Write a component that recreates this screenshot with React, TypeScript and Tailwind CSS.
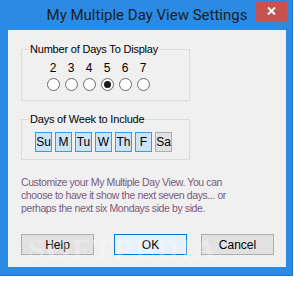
import React from "react";

const days = ["Su", "M", "Tu", "W", "Th", "F", "Sa"];
const nums = [2, 3, 4, 5, 6, 7];

export default function App() {
  const font = { fontFamily: '"Liberation Sans", Arial, sans-serif' };
  return (
    <div className="w-[294px] h-[286px] bg-white relative overflow-hidden" style={font}>
      <div className="w-[293px] h-[276px] bg-[#2b8be4] flex flex-col border-r border-b border-[#1f75c6]">
        <div className="h-[30px] relative flex items-start">
          <div className="flex-1 text-center pt-[5px] pl-[2px] text-[15px] leading-[20px] text-[#1e1e1e] whitespace-nowrap" style={{ fontFamily: 'Roboto, "Noto Sans", sans-serif' }}>
            My Multiple Day View Settings
          </div>
          <div className="absolute left-[256px] top-[1px] w-[31px] h-[20px] bg-[#c75050] flex items-center justify-center">
            <svg width="9" height="8" viewBox="0 0 9 8">
              <path d="M1 0.5 L8 7.5 M8 0.5 L1 7.5" stroke="white" strokeWidth="2" />
            </svg>
          </div>
        </div>
        <div className="ml-[8px] w-[278px] h-[237px] bg-[#f0f0f0] relative flex flex-col pl-[13px] pt-[19px] text-[11px] text-black">
          <div className="w-[169px] h-[52px] border border-[#dcdcdc] relative pl-[22px] pt-[12px] flex">
            <div className="absolute left-[7px] -top-[8px] px-[1px] bg-[#f0f0f0] leading-[14px] whitespace-nowrap tracking-[-0.2px]">Number of Days To Display</div>
            {nums.map((n) => (
              <div key={n} className="w-[18px] flex flex-col items-center">
                <div className="leading-[13px] text-[12px]">{n}</div>
                <div className="mt-[3px] w-[13px] h-[13px] rounded-full border border-[#6b6b6b] bg-white flex items-center justify-center">
                  {n === 5 && <div className="w-[7px] h-[7px] rounded-full bg-[#1a1a1a]" />}
                </div>
              </div>
            ))}
          </div>
          <div className="mt-[18px] w-[169px] h-[41px] border border-[#dcdcdc] relative pl-[13px] pt-[12px] flex gap-[3px]">
            <div className="absolute left-[7px] -top-[8px] px-[1px] bg-[#f0f0f0] leading-[14px] whitespace-nowrap tracking-[-0.2px]">Days of Week to Include</div>
            {days.map((d) => (
              <div
                key={d}
                className={
                  d === "Sa"
                    ? "w-[17px] h-[20px] border border-[#adadad] bg-[#e1e1e1] flex items-center justify-center leading-none text-[12px]"
                    : "w-[17px] h-[20px] border border-[#3c97ef] bg-[#cce4f7] flex items-center justify-center leading-none text-[12px]"
                }
              >
                {d}
              </div>
            ))}
          </div>
          <div className="mt-[16px] text-[#7b5a7d] text-[10.5px] leading-[13px] w-[250px] tracking-[-0.4px] whitespace-nowrap">
            Customize your My Multiple Day View. You can<br />
            choose to have it show the next seven days... or<br />
            perhaps the next six Mondays side by side.
          </div>
          <div className="mt-[19px] flex text-[12px]">
            <div className="w-[73px] h-[21px] border border-[#adadad] bg-[#e1e1e1] flex items-center justify-center">Help</div>
            <div className="ml-[20px] w-[73px] h-[21px] border border-[#0078d7] bg-[#e5f1fb] flex items-center justify-center">OK</div>
            <div className="ml-[14px] w-[73px] h-[21px] border border-[#adadad] bg-[#e1e1e1] flex items-center justify-center">Cancel</div>
          </div>
          <div className="absolute left-[20px] top-[196px] text-[30px] font-bold tracking-[2px] text-white/30 pointer-events-none" style={{ fontFamily: '"Liberation Serif", serif' }}>
            SOFTPEDIA
          </div>
        </div>
      </div>
    </div>
  );
}
